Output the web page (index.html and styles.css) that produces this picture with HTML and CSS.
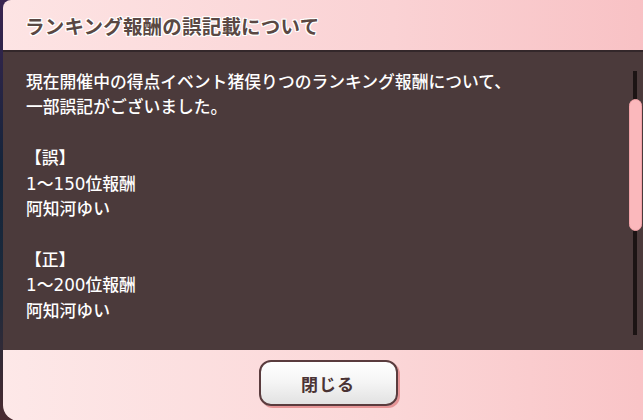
FILE: index.html
```html
<!DOCTYPE html>
<html lang="ja">
<head>
	<meta charset="UTF-8">
	<title>ランキング報酬の誤記載について</title>
<link rel="stylesheet" href="styles.css">
</head>
<body>
<div class="dialog">
	<div class="dialog_head">
		<h1 class="title">ランキング報酬の誤記載について</h1>
	</div>
	<div class="dialog_body">
		<div class="notice">
			<p>現在開催中の得点イベント猪俣りつのランキング報酬について、<br>
一部誤記がございました。</p>
			<p><span class="mark">【誤】</span><br>
1〜150位報酬<br>
阿知河ゆい</p>
			<p><span class="mark">【正】</span><br>
1〜200位報酬<br>
阿知河ゆい</p>
		</div>
		<div class="scroll">
			<div class="track"></div>
			<div class="thumb"></div>
		</div>
	</div>
	<div class="dialog_foot">
		<a href="#" class="close">閉じる</a>
	</div>
</div>
</body>
</html>
```

FILE: styles.css
```css
	html, body{
		margin: 0;
		height: 420px;
		overflow: hidden;
	}
	body{
		background: linear-gradient(#3a2450, #14243a 40%, #1c2a3c 70%, #4a2a30);
		padding-left: 3px;
		font-family: "Noto Sans CJK JP", "Noto Sans", sans-serif;
	}
	.dialog{
		width: 650px;
		height: 421px;
		display: flex;
		flex-direction: column;
		border-radius: 8px 0 0 16px;
		overflow: hidden;
	}
	.dialog_head{
		height: 50px;
		flex-shrink: 0;
		display: flex;
		align-items: center;
		padding-left: 22px;
		background: linear-gradient(90deg, #fde4e4, #fad2d4 60%, #f8c1c4);
	}
	.title{
		margin: 0;
		font-size: 19.5px;
		font-weight: 600;
		color: #5a4843;
		letter-spacing: 0.2px;
		text-shadow: 1px 0 0 #fff, -1px 0 0 #fff, 0 1px 0 #fff, 0 -1px 0 #fff, 1px 1px 0 #fff, -1px -1px 0 #fff, 1px -1px 0 #fff, -1px 1px 0 #fff;
	}
	.dialog_body{
		height: 298px;
		flex-shrink: 0;
		display: flex;
		background: #4b3a3b;
		border-top: 2px solid #33272a;
	}
	.notice{
		flex: 1;
		padding: 18px 0 0 23px;
		color: #fff;
		font-family: "DejaVu Sans", "Noto Sans CJK JP", sans-serif;
		font-size: 16.8px;
		font-weight: 500;
		line-height: 25.4px;
	}
	.notice p{
		margin: 0 0 25.4px 0;
	}
	.mark{
		margin-left: -1px;
	}
	.scroll{
		width: 13px;
		margin-right: 11px;
		position: relative;
	}
	.track{
		position: absolute;
		left: 4px;
		top: 19px;
		width: 4px;
		height: 264px;
		background: #1c1414;
	}
	.thumb{
		position: absolute;
		left: 0;
		top: 47px;
		width: 11px;
		height: 130px;
		border-radius: 7px;
		background: #fbb8bc;
		border: 1px solid #f3a3a8;
	}
	.dialog_foot{
		flex: 1;
		display: flex;
		justify-content: center;
		align-items: flex-start;
		padding-top: 10px;
		background: linear-gradient(90deg, #fde8e8, #fbd6d7 60%, #f9c3c6);
	}
	.close{
		width: 135px;
		height: 42px;
		display: flex;
		align-items: center;
		justify-content: center;
		border: 2px solid #5a3c3e;
		border-radius: 12px;
		background: linear-gradient(#ffffff, #f4f4f4 50%, #e2e2e2);
		box-shadow: 2px 2px 0 #e69597;
		color: #4a3334;
		font-size: 17px;
		font-weight: 700;
		text-decoration: none;
		letter-spacing: 1px;
	}
```
